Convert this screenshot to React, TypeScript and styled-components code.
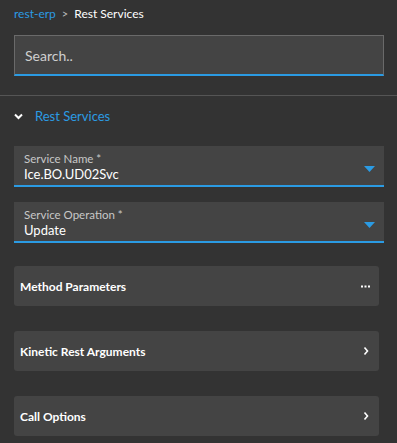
import React from "react";
import styled, { createGlobalStyle } from "styled-components";

const Global = createGlobalStyle`
  html, body { margin: 0; padding: 0; background: #333333; }
  body { font-family: Lato, "Noto Sans", sans-serif; color: #ffffff; }
  * { box-sizing: border-box; }
`;

const Page = styled.div`
  width: 397px;
  height: 443px;
  background: #333333;
  display: flex;
  flex-direction: column;
  overflow: hidden;
`;

const Crumbs = styled.div`
  display: flex;
  align-items: center;
  gap: 6px;
  padding: 6px 14px 0 14px;
  height: 20px;
  font-size: 12px;
`;

const CrumbLink = styled.span`
  color: #2b9be3;
`;
const CrumbSep = styled.span`
  color: #bbbbbb;
  font-size: 11px;
`;
const CrumbCurrent = styled.span`
  color: #ffffff;
`;

const SearchBox = styled.div`
  margin: 15px 13px 0 14px;
  height: 41px;
  background: #444444;
  border: 1px solid #6a6a6a;
  border-bottom: 2px solid #2b9be3;
  display: flex;
  align-items: center;
  padding: 0 10px;
  font-size: 14px;
  color: #cfcfcf;
`;

const Divider = styled.div`
  margin-top: 19px;
  height: 1px;
  background: #555555;
`;

const SectionHead = styled.div`
  display: flex;
  align-items: center;
  gap: 12px;
  padding: 0 14px;
  height: 40px;
  color: #2b9be3;
  font-size: 13px;
`;

const Fields = styled.div`
  display: flex;
  flex-direction: column;
  gap: 15px;
  padding: 10px 13px 0 14px;
`;

const Field = styled.div`
  position: relative;
  height: 41px;
  background: #444444;
  border-bottom: 2px solid #2b9be3;
  padding: 6px 10px 0 10px;
  display: flex;
  flex-direction: column;
`;

const FieldLabel = styled.div`
  font-size: 11.5px;
  color: #c8c8c8;
  line-height: 13px;
`;
const FieldValue = styled.div`
  font-size: 13px;
  color: #ffffff;
  line-height: 19px;
`;

const Caret = styled.svg`
  position: absolute;
  right: 9px;
  top: 20px;
`;

const Cards = styled.div`
  display: flex;
  flex-direction: column;
  gap: 25px;
  padding: 23px 18px 0 14px;
`;

const Card = styled.div`
  height: 40px;
  background: #444444;
  border-radius: 3px;
  display: flex;
  align-items: center;
  justify-content: space-between;
  padding: 0 9px 0 6px;
  font-size: 12px;
  font-weight: 700;
  color: #ffffff;
`;

const IconSlot = styled.span`
  display: flex;
  align-items: center;
`;

const Chevron = () => (
  <svg width="8" height="10" viewBox="0 0 8 10">
    <path d="M2.5 1.5 L5.5 5 L2.5 8.5" stroke="#fff" strokeWidth="1.6" fill="none" />
  </svg>
);

const Dots = () => (
  <svg width="9" height="3" viewBox="0 0 9 3">
    <rect x="0" y="0.5" width="2" height="2" fill="#fff" />
    <rect x="3.5" y="0.5" width="2" height="2" fill="#fff" />
    <rect x="7" y="0.5" width="2" height="2" fill="#fff" />
  </svg>
);

const DownCaret = () => (
  <Caret width="11" height="6" viewBox="0 0 11 6">
    <path d="M0 0 L11 0 L5.5 6 Z" fill="#2b9be3" />
  </Caret>
);

export default function App() {
  return (
    <Page>
      <Global />
      <Crumbs>
        <CrumbLink>rest-erp</CrumbLink>
        <CrumbSep>&gt;</CrumbSep>
        <CrumbCurrent>Rest Services</CrumbCurrent>
      </Crumbs>
      <SearchBox>Search..</SearchBox>
      <Divider />
      <SectionHead>
        <svg width="9" height="7" viewBox="0 0 9 7">
          <path d="M1 1.5 L4.5 5 L8 1.5" stroke="#fff" strokeWidth="2" fill="none" />
        </svg>
        <span>Rest Services</span>
      </SectionHead>
      <Fields>
        <Field>
          <FieldLabel>Service Name *</FieldLabel>
          <FieldValue>Ice.BO.UD02Svc</FieldValue>
          <DownCaret />
        </Field>
        <Field>
          <FieldLabel>Service Operation *</FieldLabel>
          <FieldValue>Update</FieldValue>
          <DownCaret />
        </Field>
      </Fields>
      <Cards>
        <Card>
          <span>Method Parameters</span>
          <IconSlot><Dots /></IconSlot>
        </Card>
        <Card>
          <span>Kinetic Rest Arguments</span>
          <IconSlot><Chevron /></IconSlot>
        </Card>
        <Card>
          <span>Call Options</span>
          <IconSlot><Chevron /></IconSlot>
        </Card>
      </Cards>
    </Page>
  );
}
